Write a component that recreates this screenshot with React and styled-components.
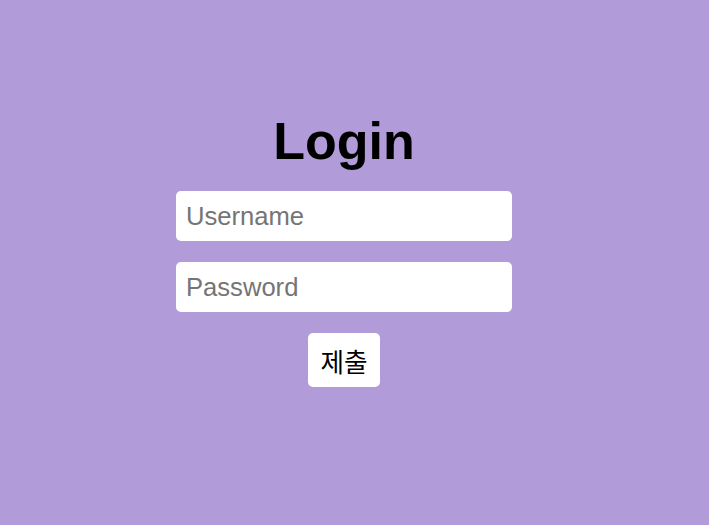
import styled, {createGlobalStyle} from "styled-components";

const GlobalStyle = createGlobalStyle`
  body {
    margin: 0;
    background: #b19cd9;
    font-family: "Liberation Sans", Arial, "Noto Sans CJK KR", sans-serif;
  }
`;

const Page = styled.div`
  min-height: 100vh;
  box-sizing: border-box;
  padding: 115px 21px 0 0;
  display: flex;
  flex-direction: column;
  align-items: center;
`;

const Form = styled.form`
  display: flex;
  flex-direction: column;
  align-items: center;
  gap: 21px;
`;

const Title = styled.h1`
  margin: 0 0 3px;
  font-size: 52px;
  line-height: 1;
  font-weight: 700;
  color: #000;
`;

const Input = styled.input`
  box-sizing: border-box;
  width: 336px;
  height: 50px;
  padding: 0 10px;
  border: none;
  border-radius: 5px;
  background: #fff;
  font-family: "Liberation Sans", Arial, sans-serif;
  font-size: 25.6px;
  color: #000;
  outline: none;

  &::placeholder {
    color: #757575;
  }
`;

const SubmitButton = styled.button`
  box-sizing: border-box;
  height: 54px;
  padding: 0 12px;
  border: none;
  border-radius: 5px;
  background: #fff;
  color: #000;
  font-family: "Liberation Sans", "Noto Sans CJK KR", sans-serif;
  font-size: 25.6px;
  cursor: pointer;
`;

function App() {
    return (
        <>
            <GlobalStyle/>
            <Page>
                <Form onSubmit={(e) => e.preventDefault()}>
                    <Title>Login</Title>
                    <Input type="text" placeholder="Username"/>
                    <Input type="password" placeholder="Password"/>
                    <SubmitButton type="submit">제출</SubmitButton>
                </Form>
            </Page>
        </>
    );
}

export default App;
